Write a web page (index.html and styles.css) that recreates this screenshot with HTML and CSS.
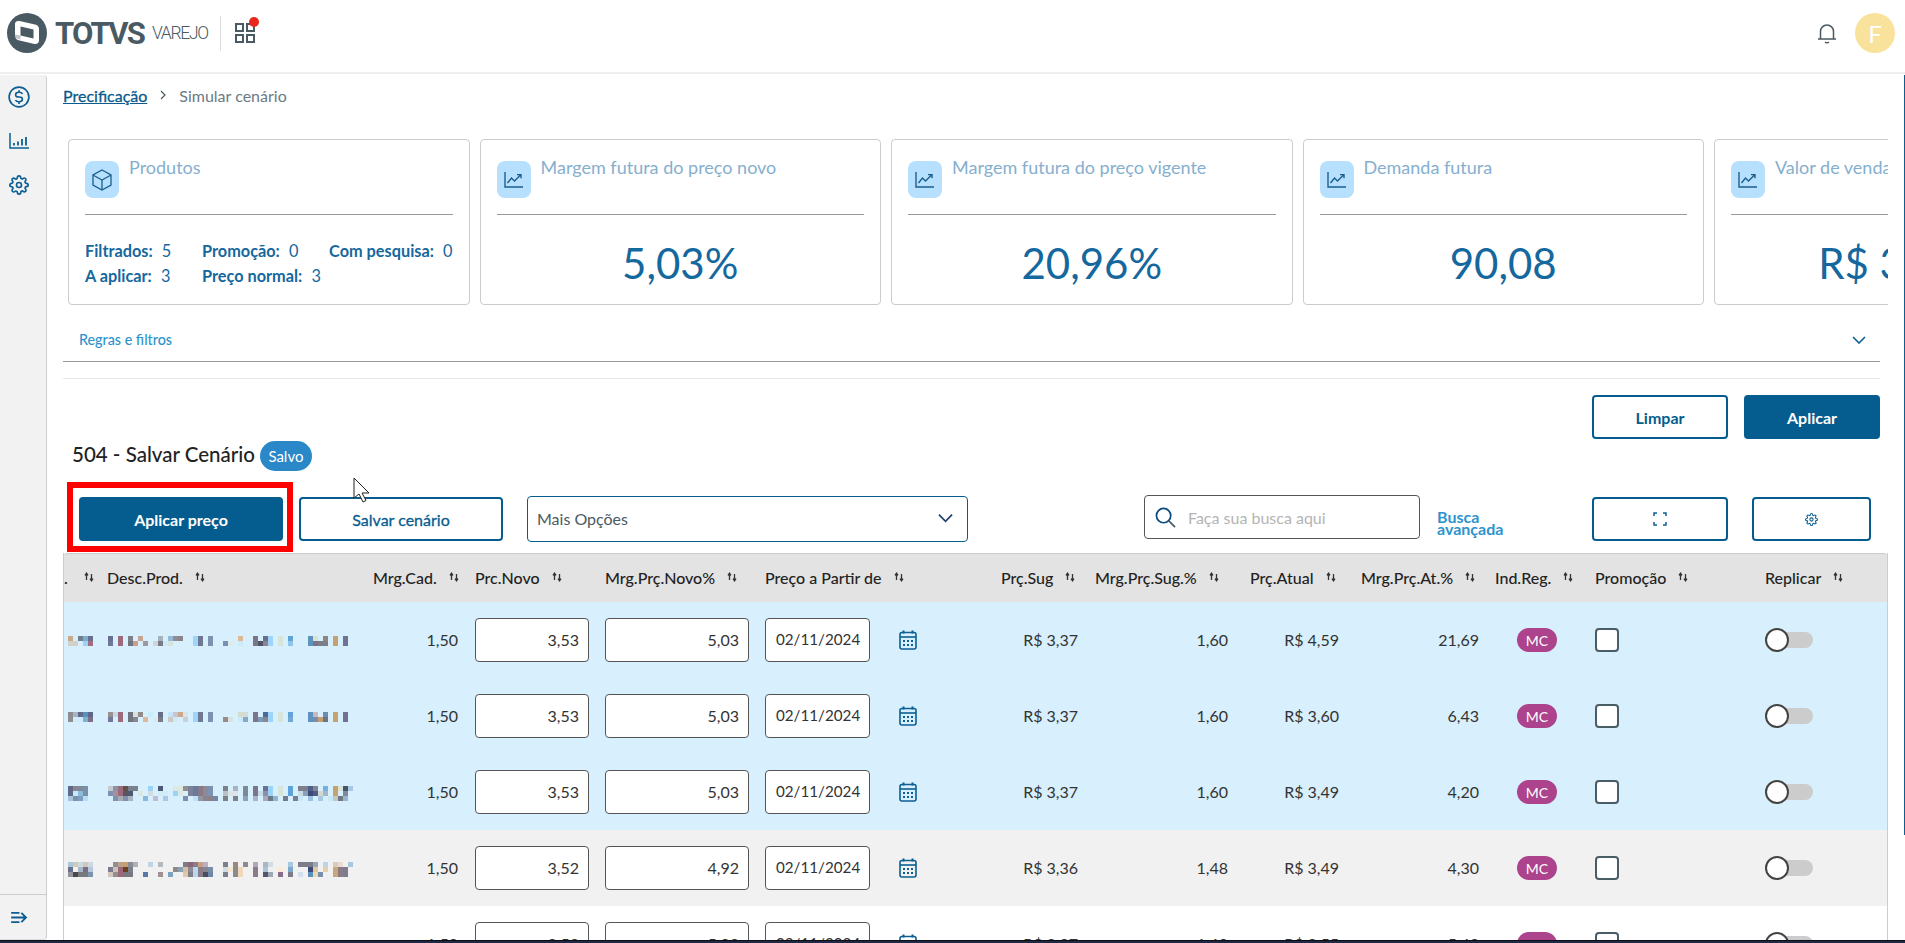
FILE: index.html
```html
<!DOCTYPE html>
<html lang="pt-BR">
<head>
<meta charset="utf-8">
<title>Simular cenário</title>
<link rel="stylesheet" href="styles.css">
</head>
<body>
<svg class="defs" aria-hidden="true">
  <symbol id="sort" viewBox="0 0 10 10"><path d="M2.5 8V2M1 3.4 2.5 1.2 4 3.4M7.5 2v6M6 6.6 7.5 8.8 9 6.6" fill="none" stroke="#333" stroke-width="1.3"/></symbol>
  <symbol id="trend" viewBox="0 0 20 18"><path d="M1 1v15h18M3.5 12l4-5 3 3 6-6M13 3.6h4v3.6" fill="none" stroke="#1b5f8e" stroke-width="1.4"/></symbol>
  <symbol id="cal" viewBox="0 0 18 20"><path d="M4.500 .5v3M13.500 .5v3" stroke="#0b5f92" stroke-width="2"/><rect x="1" y="2.500" width="16" height="16.500" rx="2" fill="none" stroke="#0b5f92" stroke-width="1.600"/><path d="M1 7h16" stroke="#0b5f92" stroke-width="1.600"/><path d="M4 10h2v2H4zM8 10h2v2H8zM12 10h2v2h-2zM4 14h2v2H4zM8 14h2v2H8zM12 14h2v2h-2z" fill="#0b5f92"/></symbol>
  <symbol id="gear" viewBox="0 0 24 24"><circle cx="12" cy="12" r="3" fill="none" stroke="currentColor" stroke-width="2"/><path d="M19.4 15a1.65 1.65 0 0 0 .33 1.82l.06.06a2 2 0 0 1 0 2.83 2 2 0 0 1-2.83 0l-.06-.06a1.65 1.65 0 0 0-1.82-.33 1.65 1.65 0 0 0-1 1.51V21a2 2 0 0 1-2 2 2 2 0 0 1-2-2v-.09A1.65 1.65 0 0 0 9 19.4a1.65 1.65 0 0 0-1.82.33l-.06.06a2 2 0 0 1-2.83 0 2 2 0 0 1 0-2.83l.06-.06a1.65 1.65 0 0 0 .33-1.82 1.65 1.65 0 0 0-1.51-1H3a2 2 0 0 1-2-2 2 2 0 0 1 2-2h.09A1.65 1.65 0 0 0 4.6 9a1.65 1.65 0 0 0-.33-1.82l-.06-.06a2 2 0 0 1 0-2.83 2 2 0 0 1 2.83 0l.06.06a1.65 1.65 0 0 0 1.82.33H9a1.65 1.65 0 0 0 1-1.51V3a2 2 0 0 1 2-2 2 2 0 0 1 2 2v.09a1.65 1.65 0 0 0 1 1.51 1.65 1.65 0 0 0 1.82-.33l.06-.06a2 2 0 0 1 2.83 0 2 2 0 0 1 0 2.83l-.06.06a1.65 1.65 0 0 0-.33 1.82V9a1.65 1.65 0 0 0 1.51 1H21a2 2 0 0 1 2 2 2 2 0 0 1-2 2h-.09a1.65 1.65 0 0 0-1.51 1z" fill="none" stroke="currentColor" stroke-width="2" stroke-linejoin="round"/></symbol>

  <g id="c12">
    <path d="M10 0h1v2h-1z" fill="#9c6a7a"/>
    <path fill="#9fd4fa" d="M25 0h1v2h-1zM40 0h1v2h-1z"/>
    <path fill="#6f7893" d="M26 0h1v2h-1z"/>
    <path fill="#7b92b0" d="M28 0h1v2h-1z"/>
    <path fill="#d6e4d9" d="M42 0h1v2h-1z"/>
    <path fill="#5f93bf" d="M48 0h1v2h-1z"/>
    <path fill="#c5a271" d="M53 0h1v2h-1z"/>
    <path fill="#70728f" d="M55 0h1v2h-1z"/>
    <path fill="#7c7488" d="M37 0h1v2h-1z"/>
  </g>
  <symbol id="m1" viewBox="0 0 57 2">
    <use href="#c12"/>
    <path fill="#c8a98a" d="M0 0h1v1H0z"/><path fill="#6f7d8c" d="M2 0h1v1H2z"/><path fill="#7aaed0" d="M3 0h1v1H3z"/><path fill="#68708f" d="M4 0h1v1H4zM8 0h1v1H8z"/><path fill="#7c808a" d="M12 0h1v1h-1z"/><path fill="#c9a392" d="M14 0h1v1h-1z"/><path fill="#a7b3bb" d="M18 0h1v1h-1z"/><path fill="#93bcdc" d="M20 0h1v1h-1z"/><path fill="#8b8e99" d="M21 0h1v1h-1z"/><path fill="#8f8388" d="M22 0h1v1h-1z"/><path fill="#dcba94" d="M34 0h1v1h-1z"/><path fill="#66718f" d="M39 0h1v1h-1z"/><path fill="#5fa4d8" d="M44 0h1v1h-1z"/><path fill="#d8e4d0" d="M49 0h1v1h-1z"/><path fill="#8e8587" d="M51 0h1v1h-1z"/>
    <path fill="#d2d0c8" d="M0 1h2v1H0z"/><path fill="#9ad2f8" d="M3 1h1v1H3z"/><path fill="#a26d80" d="M4 1h1v1H4z"/><path fill="#72789a" d="M8 1h1v1H8z"/><path fill="#70747e" d="M12 1h1v1h-1z"/><path fill="#c9a08c" d="M13 1h1v1h-1z"/><path fill="#9a9aa0" d="M15 1h1v1h-1z"/><path fill="#d0d4d8" d="M17 1h1v1h-1z"/><path fill="#767c88" d="M18 1h1v1h-1z"/><path fill="#cfe9fb" d="M19 1h1v1h-1z"/><path fill="#d5e2dd" d="M20 1h1v1h-1z"/><path fill="#7b8fb2" d="M31 1h1v1h-1z"/><path fill="#dcebeb" d="M32 1h1v1h-1z"/><path fill="#cdeafc" d="M34 1h1v1h-1z"/><path fill="#4e5568" d="M38 1h1v1h-1z"/><path fill="#8a8590" d="M39 1h1v1h-1z"/><path fill="#8cc4ea" d="M44 1h1v1h-1z"/><path fill="#7f6f88" d="M49 1h1v1h-1z"/><path fill="#7b7e88" d="M50 1h2v1h-2z"/>
  </symbol>
  <symbol id="m2" viewBox="0 0 57 2">
    <use href="#c12"/>
    <path fill="#8d8a90" d="M0 0h1v1H0z"/><path fill="#a6b4c8" d="M1 0h1v1H1z"/><path fill="#5f6a88" d="M2 0h1v1H2z"/><path fill="#5a90bc" d="M3 0h1v1H3z"/><path fill="#5e6788" d="M4 0h1v1H4z"/><path fill="#96908f" d="M8 0h1v1H8z"/><path fill="#c8d8e0" d="M9 0h1v1H9z"/><path fill="#6f7480" d="M12 0h1v1h-1z"/><path fill="#d8e2dc" d="M13 0h1v1h-1z"/><path fill="#938a90" d="M14 0h1v1h-1z"/><path fill="#c8ecfc" d="M16 0h1v1h-1z"/><path fill="#676d88" d="M18 0h1v1h-1z"/><path fill="#c4e4f8" d="M20 0h1v1h-1z"/><path fill="#c8c4d4" d="M21 0h1v1h-1z"/><path fill="#cfa88a" d="M22 0h1v1h-1z"/><path fill="#d8e4e6" d="M23 0h1v1h-1z"/><path fill="#d4dcd0" d="M34 0h2v1h-2z"/><path fill="#4a6a98" d="M39 0h1v1h-1z"/><path fill="#5fa4d8" d="M44 0h1v1h-1z"/><path fill="#c8b8c0" d="M49 0h1v1h-1z"/><path fill="#6f8cac" d="M51 0h1v1h-1z"/>
    <path fill="#8d8f90" d="M0 1h1v1H0z"/><path fill="#d0ecfb" d="M1 1h2v1H1z"/><path fill="#82aed0" d="M3 1h1v1H3z"/><path fill="#7c7088" d="M4 1h1v1H4z"/><path fill="#72789a" d="M8 1h1v1H8z"/><path fill="#70747e" d="M12 1h1v1h-1z"/><path fill="#8a868c" d="M13 1h1v1h-1z"/><path fill="#dcb99c" d="M15 1h1v1h-1z"/><path fill="#dce8ec" d="M17 1h1v1h-1z"/><path fill="#767c88" d="M18 1h1v1h-1z"/><path fill="#cfc8c0" d="M20 1h1v1h-1z"/><path fill="#cfe9fb" d="M21 1h1v1h-1z"/><path fill="#c8d0d8" d="M23 1h1v1h-1z"/><path fill="#978a88" d="M31 1h1v1h-1z"/><path fill="#d4e4e4" d="M32 1h1v1h-1z"/><path fill="#cdeafc" d="M34 1h1v1h-1z"/><path fill="#88a8c4" d="M35 1h1v1h-1z"/><path fill="#7d9ab8" d="M38 1h1v1h-1z"/><path fill="#8a8590" d="M39 1h1v1h-1z"/><path fill="#74a8d4" d="M44 1h1v1h-1z"/><path fill="#7b8ba8" d="M49 1h1v1h-1z"/><path fill="#c49f70" d="M50 1h1v1h-1z"/><path fill="#6f7480" d="M51 1h1v1h-1z"/>
  </symbol>
  <symbol id="m3" viewBox="0 0 57 3">
    <path fill="#5f6a88" d="M0 0h1v2H0z"/><path fill="#8a8590" d="M1 0h1v1H1z"/><path fill="#7f8a98" d="M2 0h1v1H2z"/><path fill="#7890a8" d="M3 0h1v2H3z"/><path fill="#c4ccd0" d="M8 0h1v1H8z"/><path fill="#8c94a0" d="M9 0h1v1H9z"/><path fill="#9c6a7a" d="M10 0h1v2h-1zM37 0h1v1h-1z"/><path fill="#5f5048" d="M11 0h1v1h-1z"/><path fill="#78808c" d="M12 0h2v1h-2z"/><path fill="#9ad2fa" d="M16 0h1v1h-1zM21 1h1v1h-1zM40 0h1v2h-1z"/><path fill="#4a5a78" d="M18 0h1v1h-1z"/><path fill="#dce8e0" d="M21 0h2v1h-2zM22 1h1v1h-1z"/><path fill="#8f8e90" d="M23 0h1v1h-1z"/><path fill="#7c8098" d="M24 0h1v2h-1z"/><path fill="#6a7a9a" d="M25 0h1v2h-1z"/><path fill="#8a7a88" d="M26 0h1v2h-1z"/><path fill="#8a8a98" d="M27 0h1v2h-1z"/><path fill="#7b92b0" d="M28 0h1v2h-1z"/><path fill="#7c8088" d="M31 0h1v1h-1zM31 2h1v1h-1zM33 2h1v1h-1z"/><path fill="#a8b4c0" d="M33 0h1v1h-1z"/><path fill="#7c8a98" d="M35 0h1v2h-1z"/><path fill="#7c7488" d="M37 0h1v2h-1z"/><path fill="#6a7290" d="M39 0h1v1h-1z"/><path fill="#d6e4d9" d="M42 0h1v2h-1z"/><path fill="#5fa4d8" d="M44 0h1v2h-1z"/><path fill="#7c808c" d="M46 0h2v1h-2z"/><path fill="#50608a" d="M48 0h1v1h-1z"/><path fill="#7f8594" d="M49 0h1v1h-1z"/><path fill="#78b0dc" d="M51 0h1v1h-1z"/><path fill="#c5a271" d="M53 0h1v2h-1z"/><path fill="#d8e4d8" d="M54 0h1v1h-1z"/><path fill="#4a5468" d="M55 0h1v1h-1z"/><path fill="#a8c8e4" d="M56 0h1v1h-1z"/>
    <path fill="#c8e8fb" d="M1 1h1v1H1z"/><path fill="#8cbcdc" d="M2 1h1v1H2z"/><path fill="#7c92b0" d="M8 1h1v1H8zM9 2h1v1H9z"/><path fill="#a6909c" d="M9 1h1v1H9z"/><path fill="#5a5460" d="M11 1h1v1h-1z"/><path fill="#4e5a70" d="M12 1h1v1h-1z"/><path fill="#d8e8e0" d="M14 1h1v1h-1z"/><path fill="#d0dce0" d="M16 1h1v1h-1z"/><path fill="#d0ecf8" d="M18 1h2v1h-2z"/><path fill="#b8c0c8" d="M31 1h1v1h-1z"/><path fill="#d8e4e8" d="M32 1h2v1h-2z"/><path fill="#c4dcec" d="M38 1h1v1h-1z"/><path fill="#8a90a8" d="M39 1h1v1h-1z"/><path fill="#c8dce8" d="M46 1h1v1h-1z"/><path fill="#8aa0b8" d="M47 1h1v1h-1z"/><path fill="#3e4a7a" d="M48 1h1v1h-1z"/><path fill="#4c5c88" d="M49 1h1v1h-1z"/><path fill="#d0d8d0" d="M50 1h1v1h-1z"/><path fill="#a0b8cc" d="M51 1h1v1h-1z"/><path fill="#8088a0" d="M55 1h1v1h-1z"/>
    <path fill="#a4c4e0" d="M0 2h1v1H0z"/><path fill="#8090a8" d="M1 2h1v1H1z"/><path fill="#7ca0c4" d="M2 2h1v1H2z"/><path fill="#bcdcf0" d="M3 2h1v1H3z"/><path fill="#a8aab4" d="M10 2h1v1h-1z"/><path fill="#8090b0" d="M11 2h1v1h-1z"/><path fill="#a8b4c4" d="M12 2h1v1h-1z"/><path fill="#88b8e0" d="M15 2h1v1h-1z"/><path fill="#c0bcd0" d="M17 2h1v1h-1z"/><path fill="#a8c8e4" d="M19 2h1v1h-1zM50 2h1v1h-1z"/><path fill="#7c90b0" d="M23 2h1v1h-1z"/><path fill="#c0e0f8" d="M25 2h1v1h-1z"/><path fill="#9098a8" d="M26 2h1v1h-1z"/><path fill="#8a8490" d="M27 2h1v1h-1z"/><path fill="#8c8088" d="M28 2h1v1h-1z"/><path fill="#7088a8" d="M29 2h1v1h-1z"/><path fill="#d8f0fc" d="M32 2h1v1h-1z"/><path fill="#88a4bc" d="M35 2h1v1h-1z"/><path fill="#a8b4cc" d="M37 2h1v1h-1z"/><path fill="#a8a8c0" d="M39 2h1v1h-1z"/><path fill="#707880" d="M40 2h1v1h-1z"/><path fill="#8cb4d8" d="M41 2h1v1h-1z"/><path fill="#707c90" d="M43 2h1v1h-1z"/><path fill="#788090" d="M45 2h1v1h-1z"/><path fill="#c8e8fc" d="M46 2h1v1h-1z"/><path fill="#9cc0e0" d="M48 2h1v1h-1z"/><path fill="#c4e8fc" d="M52 2h1v1h-1z"/><path fill="#c4c8c0" d="M53 2h1v1h-1z"/><path fill="#707888" d="M54 2h1v1h-1z"/><path fill="#9cb4cc" d="M55 2h1v1h-1z"/>
  </symbol>
  <symbol id="m4" viewBox="0 0 57 3">
    <path fill="#a8c8dc" d="M0 0h1v1H0z"/><path fill="#d4c8b8" d="M1 0h1v1H1zM3 0h1v1H3z"/><path fill="#c8dce4" d="M2 0h1v1H2z"/><path fill="#ccd8e4" d="M4 0h1v1H4z"/><path fill="#8f8f90" d="M9 0h1v1H9z"/><path fill="#c0a088" d="M10 0h1v1h-1z"/><path fill="#c8a070" d="M11 0h1v1h-1z"/><path fill="#8c8c94" d="M12 0h1v1h-1z"/><path fill="#b0b0b8" d="M13 0h1v1h-1z"/><path fill="#bcd4e8" d="M16 0h1v1h-1zM51 0h1v1h-1z"/><path fill="#b0bac0" d="M18 0h1v1h-1z"/><path fill="#7c7c88" d="M23 0h1v1h-1z"/><path fill="#8c6478" d="M24 0h1v1h-1z"/><path fill="#8c7c88" d="M25 0h1v1h-1z"/><path fill="#c8a088" d="M26 0h1v1h-1z"/><path fill="#b8b0c4" d="M27 0h1v1h-1z"/><path fill="#7c8088" d="M31 0h1v1h-1zM31 2h1v1h-1z"/><path fill="#9c8880" d="M33 0h1v1h-1z"/><path fill="#8c8c90" d="M35 0h1v1h-1zM33 1h1v2h-1z"/><path fill="#b0a8b8" d="M37 0h1v1h-1z"/><path fill="#b0b4bc" d="M39 0h1v1h-1z"/><path fill="#d0dce8" d="M40 0h1v1h-1z"/><path fill="#a8c8e0" d="M44 0h1v1h-1zM56 0h1v1h-1z"/><path fill="#7c7c8a" d="M46 0h3v1h-3z"/><path fill="#98a4b8" d="M49 0h1v1h-1z"/><path fill="#dccabc" d="M53 0h1v1h-1z"/><path fill="#e8dcd4" d="M54 0h1v1h-1z"/>
    <path fill="#6a7088" d="M0 1h1v1H0z"/><path fill="#a8b8c8" d="M2 1h1v1H2z"/><path fill="#7a6f80" d="M3 1h1v1H3z"/><path fill="#b8c8dc" d="M4 1h1v1H4z"/><path fill="#7a7a90" d="M8 1h1v1H8z"/><path fill="#d0c0b8" d="M9 1h1v1H9z"/><path fill="#9a6878" d="M10 1h1v2h-1z"/><path fill="#6a4020" d="M11 1h1v1h-1z"/><path fill="#7c8088" d="M12 1h1v1h-1z"/><path fill="#8f8a88" d="M21 1h1v1h-1z"/><path fill="#8aa0b8" d="M22 1h1v1h-1z"/><path fill="#d8c0a0" d="M23 1h1v1h-1z"/><path fill="#8f8a94" d="M24 1h1v1h-1z"/><path fill="#b8d8f0" d="M25 1h1v2h-1z"/><path fill="#8a7c88" d="M26 1h1v2h-1z"/><path fill="#8a8490" d="M27 1h1v1h-1z"/><path fill="#7b8ea8" d="M28 1h1v1h-1z"/><path fill="#d0dce8" d="M31 1h1v1h-1z"/><path fill="#f8e8d0" d="M32 1h1v1h-1z"/><path fill="#f0d8b8" d="M34 1h1v2h-1z"/><path fill="#887c8c" d="M37 1h1v2h-1z"/><path fill="#a8c4dc" d="M39 1h1v1h-1z"/><path fill="#fbecd8" d="M42 1h1v1h-1z"/><path fill="#7ca8cc" d="M44 1h1v1h-1z"/><path fill="#3e4a78" d="M48 1h1v1h-1z"/><path fill="#e0c8a0" d="M49 1h1v1h-1z"/><path fill="#e8d0a8" d="M51 1h1v1h-1z"/><path fill="#c8a878" d="M53 1h1v2h-1z"/><path fill="#887c88" d="M54 1h1v2h-1z"/><path fill="#807c90" d="M55 1h1v2h-1z"/>
    <path fill="#90949c" d="M0 2h1v1H0z"/><path fill="#484848" d="M1 2h1v1H1z"/><path fill="#787880" d="M2 2h2v1H2zM11 2h2v1h-2z"/><path fill="#7c94b0" d="M4 2h1v1H4z"/><path fill="#d4c8bc" d="M8 2h1v1H8z"/><path fill="#909090" d="M9 2h1v1H9z"/><path fill="#5878a8" d="M15 2h1v1h-1z"/><path fill="#a09090" d="M18 2h1v1h-1z"/><path fill="#7ca4c0" d="M20 2h1v1h-1z"/><path fill="#e0c8a8" d="M23 2h1v1h-1z"/><path fill="#7f7f88" d="M24 2h1v1h-1z"/><path fill="#484c60" d="M27 2h1v1h-1z"/><path fill="#7088a8" d="M28 2h1v1h-1z"/><path fill="#505868" d="M39 2h1v1h-1z"/><path fill="#a0a8b8" d="M40 2h1v1h-1z"/><path fill="#886c88" d="M42 2h1v1h-1z"/><path fill="#7c7c88" d="M44 2h1v1h-1z"/><path fill="#d0e0ec" d="M46 2h1v1h-1z"/><path fill="#5890c0" d="M48 2h1v1h-1z"/><path fill="#f0d8b0" d="M49 2h1v1h-1z"/><path fill="#7890ac" d="M50 2h1v1h-1z"/>
  </symbol>
</svg>

<div class="app">
  <header class="topbar">
    <svg class="logo-mark" viewBox="0 0 40 40" aria-hidden="true"><circle cx="20" cy="20" r="20" fill="#4a5a62"/><path d="M8 11C8 8.500 10 7.500 12.500 8L28 11.500C30.500 12 32 13.500 32 16V27.500C32 30 30 31.500 27.500 31L12.500 27.500C10 27 8 25.500 8 23z" fill="#fff"/><path d="M13.500 13.500 26.500 16.500V25.500L13.500 22.500z" fill="#4a5a62"/><path d="M8 21.500 13.500 22.500V26.500L8 25z" fill="#4a5a62" opacity=".35"/></svg>
    <span class="brand">TOTVS</span>
    <span class="brand-sub">VAREJO</span>
    <span class="topbar-sep"></span>
    <span class="apps">
      <svg class="apps-icon" viewBox="0 0 20 20" aria-hidden="true"><path d="M1 1h7v7H1zM12 1h7v7h-7zM1 12h7v7H1zM12 12h7v7h-7z" fill="none" stroke="#4a5a62" stroke-width="2"/></svg>
      <span class="apps-dot"></span>
    </span>
    <svg class="bell" viewBox="0 0 20 20" aria-hidden="true"><path d="M1 15.500h18M3.500 15.500V8a6.500 6.500 0 0 1 13 0v7.500M8 18.500q2 1.500 4 0" fill="none" stroke="#4a5a62" stroke-width="1.500"/></svg>
    <span class="avatar">F</span>
  </header>

  <div class="body">
    <nav class="sidebar">
      <svg class="side-icon side-first" viewBox="0 0 24 24" aria-hidden="true"><circle cx="12" cy="12" r="10.800" fill="none" stroke="currentColor" stroke-width="1.800"/><path d="M15.800 8.800Q15 6.800 12 6.800 8.300 6.800 8.300 9.500t3.700 2.500 3.700 2.500-3.700 2.700q-3 0-3.800-2M12 4.500v2.300M12 17.200v2.300" fill="none" stroke="currentColor" stroke-width="1.800"/></svg>
      <svg class="side-icon side-chart" viewBox="0 0 20 16" aria-hidden="true"><path d="M1 0v15h19" fill="none" stroke="currentColor" stroke-width="1.500"/><path d="M5 10v2.500M9 8.500v4M13 6v6.500M17 4v8.500" fill="none" stroke="currentColor" stroke-width="1.800"/></svg>
      <svg class="side-icon side-gear" aria-hidden="true"><use href="#gear"/></svg>
      <div class="side-foot">
        <svg class="side-expand" viewBox="0 0 18 14" aria-hidden="true"><path d="M0 2h9M0 7h15M0 12h9M11 2l5 5-5 5" fill="none" stroke="currentColor" stroke-width="2"/></svg>
      </div>
    </nav>

    <main class="content">
      <div class="crumbs"><a class="crumb-link">Precificação</a><svg class="crumb-sep" viewBox="0 0 6 10" aria-hidden="true"><path d="M1 1l4 4-4 4" fill="none" stroke="#4a5a62" stroke-width="1.200"/></svg><span class="crumb-now">Simular cenário</span></div>

      <section class="cards">
        <article class="card">
          <div class="card-head">
            <span class="card-icon"><svg class="box-icon" viewBox="0 0 20 22" aria-hidden="true"><path d="M10 1 19 6v10l-9 5-9-5V6zM1 6l9 5 9-5M10 11v10" fill="none" stroke="#1b5f8e" stroke-width="1.300"/></svg></span>
            <h2 class="card-title">Produtos</h2>
          </div>
          <div class="stats">
            <span class="stat stat-a"><b>Filtrados:</b> 5</span><span class="stat stat-b"><b>Promoção:</b> 0</span><span class="stat stat-c"><b>Com pesquisa:</b> 0</span>
            <span class="stat stat-a"><b>A aplicar:</b> 3</span><span class="stat stat-b"><b>Preço normal:</b> 3</span>
          </div>
        </article>
        <article class="card">
          <div class="card-head"><span class="card-icon"><svg class="trend-icon"><use href="#trend"/></svg></span><h2 class="card-title">Margem futura do preço novo</h2></div>
          <div class="card-value">5,03%</div>
        </article>
        <article class="card">
          <div class="card-head"><span class="card-icon"><svg class="trend-icon"><use href="#trend"/></svg></span><h2 class="card-title">Margem futura do preço vigente</h2></div>
          <div class="card-value">20,96%</div>
        </article>
        <article class="card">
          <div class="card-head"><span class="card-icon"><svg class="trend-icon"><use href="#trend"/></svg></span><h2 class="card-title">Demanda futura</h2></div>
          <div class="card-value">90,08</div>
        </article>
        <article class="card">
          <div class="card-head"><span class="card-icon"><svg class="trend-icon"><use href="#trend"/></svg></span><h2 class="card-title">Valor de venda futuro</h2></div>
          <div class="card-value">R$ 30.245</div>
        </article>
      </section>

      <div class="rules">
        <span class="rules-label">Regras e filtros</span>
        <svg class="rules-chevron" viewBox="0 0 14 8" aria-hidden="true"><path d="M1 1l6 6 6-6" fill="none" stroke="#0b5f92" stroke-width="1.600"/></svg>
      </div>
      <div class="soft-line"></div>

      <div class="actions">
        <button class="btn btn-outline btn-limpar">Limpar</button>
        <button class="btn btn-solid btn-aplicar">Aplicar</button>
      </div>

      <div class="title-row">
        <h1 class="scenario">504 - Salvar Cenário</h1>
        <span class="badge-saved">Salvo</span>
        <svg class="cursor" viewBox="0 0 18 26" aria-hidden="true"><path d="M1 1v20l5-4 4 8 3-1.500-4-7.500h7z" fill="#fff" stroke="#222" stroke-width="1"/></svg>
      </div>

      <div class="toolbar">
        <div class="highlight"><button class="btn btn-solid btn-price">Aplicar preço</button></div>
        <button class="btn btn-outline btn-save">Salvar cenário</button>
        <div class="select"><span>Mais Opções</span><svg class="select-chevron" viewBox="0 0 16 10" aria-hidden="true"><path d="M1 1.500l7 7 7-7" fill="none" stroke="#1f3f6e" stroke-width="1.800"/></svg></div>
        <div class="search">
          <svg class="search-icon" viewBox="0 0 22 22" aria-hidden="true"><circle cx="9" cy="9" r="7.500" fill="none" stroke="#0b4a7e" stroke-width="1.800"/><path d="M14.500 14.500 21 21" stroke="#4a5a62" stroke-width="1.800"/></svg>
          <span class="search-text">Faça sua busca aqui</span>
        </div>
        <a class="advanced">Busca avançada</a>
        <button class="btn btn-outline btn-full"><svg class="full-icon" viewBox="0 0 14 14" aria-hidden="true"><path d="M1 4V1h3M10 1h3v3M13 10v3h-3M4 13H1v-3" fill="none" stroke="#0b5f92" stroke-width="1.500"/></svg></button>
        <button class="btn btn-outline btn-gear"><svg class="gear-icon"><use href="#gear"/></svg></button>
      </div>

      <section class="table">
        <div class="row head">
          <div class="th th-clip">.<svg class="sort"><use href="#sort"/></svg></div>
          <div class="th">Desc.Prod.<svg class="sort"><use href="#sort"/></svg></div>
          <div class="th">Mrg.Cad.<svg class="sort"><use href="#sort"/></svg></div>
          <div class="th">Prc.Novo<svg class="sort"><use href="#sort"/></svg></div>
          <div class="th">Mrg.Prç.Novo%<svg class="sort"><use href="#sort"/></svg></div>
          <div class="th">Preço a Partir de<svg class="sort"><use href="#sort"/></svg></div>
          <div class="th">Prç.Sug<svg class="sort"><use href="#sort"/></svg></div>
          <div class="th">Mrg.Prç.Sug.%<svg class="sort"><use href="#sort"/></svg></div>
          <div class="th">Prç.Atual<svg class="sort"><use href="#sort"/></svg></div>
          <div class="th">Mrg.Prç.At.%<svg class="sort"><use href="#sort"/></svg></div>
          <div class="th">Ind.Reg.<svg class="sort"><use href="#sort"/></svg></div>
          <div class="th">Promoção<svg class="sort"><use href="#sort"/></svg></div>
          <div class="th">Replicar<svg class="sort"><use href="#sort"/></svg></div>
        </div>

        <div class="row selected">
          <div class="mosaic-cell"><svg class="mosaic mosaic-2"><use href="#m1"/></svg></div>
          <div class="num num-cad">1,50</div>
          <div class="cell"><input class="field field-price" value="3,53" readonly></div>
          <div class="cell"><input class="field field-margin" value="5,03" readonly></div>
          <div class="cell"><input class="field field-date" value="02/11/2024" readonly><svg class="cal"><use href="#cal"/></svg></div>
          <div class="num num-sug">R$ 3,37</div>
          <div class="num num-wide">1,60</div>
          <div class="num num-wide">R$ 4,59</div>
          <div class="num num-at">21,69</div>
          <div class="cell"><span class="tag">MC</span></div>
          <div class="cell"><span class="check"></span></div>
          <div class="cell"><span class="toggle"></span></div>
        </div>

        <div class="row selected">
          <div class="mosaic-cell"><svg class="mosaic mosaic-2"><use href="#m2"/></svg></div>
          <div class="num num-cad">1,50</div>
          <div class="cell"><input class="field field-price" value="3,53" readonly></div>
          <div class="cell"><input class="field field-margin" value="5,03" readonly></div>
          <div class="cell"><input class="field field-date" value="02/11/2024" readonly><svg class="cal"><use href="#cal"/></svg></div>
          <div class="num num-sug">R$ 3,37</div>
          <div class="num num-wide">1,60</div>
          <div class="num num-wide">R$ 3,60</div>
          <div class="num num-at">6,43</div>
          <div class="cell"><span class="tag">MC</span></div>
          <div class="cell"><span class="check"></span></div>
          <div class="cell"><span class="toggle"></span></div>
        </div>

        <div class="row selected">
          <div class="mosaic-cell"><svg class="mosaic mosaic-3"><use href="#m3"/></svg></div>
          <div class="num num-cad">1,50</div>
          <div class="cell"><input class="field field-price" value="3,53" readonly></div>
          <div class="cell"><input class="field field-margin" value="5,03" readonly></div>
          <div class="cell"><input class="field field-date" value="02/11/2024" readonly><svg class="cal"><use href="#cal"/></svg></div>
          <div class="num num-sug">R$ 3,37</div>
          <div class="num num-wide">1,60</div>
          <div class="num num-wide">R$ 3,49</div>
          <div class="num num-at">4,20</div>
          <div class="cell"><span class="tag">MC</span></div>
          <div class="cell"><span class="check"></span></div>
          <div class="cell"><span class="toggle"></span></div>
        </div>

        <div class="row striped">
          <div class="mosaic-cell"><svg class="mosaic mosaic-3"><use href="#m4"/></svg></div>
          <div class="num num-cad">1,50</div>
          <div class="cell"><input class="field field-price" value="3,52" readonly></div>
          <div class="cell"><input class="field field-margin" value="4,92" readonly></div>
          <div class="cell"><input class="field field-date" value="02/11/2024" readonly><svg class="cal"><use href="#cal"/></svg></div>
          <div class="num num-sug">R$ 3,36</div>
          <div class="num num-wide">1,48</div>
          <div class="num num-wide">R$ 3,49</div>
          <div class="num num-at">4,30</div>
          <div class="cell"><span class="tag">MC</span></div>
          <div class="cell"><span class="check"></span></div>
          <div class="cell"><span class="toggle"></span></div>
        </div>

        <div class="row">
          <div class="text-cell">899</div>
          <div class="text-cell">CERV AMSTEL 269 ML ULTRA LT</div>
          <div class="num num-cad">1,50</div>
          <div class="cell"><input class="field field-price" value="3,53" readonly></div>
          <div class="cell"><input class="field field-margin" value="5,03" readonly></div>
          <div class="cell"><input class="field field-date" value="02/11/2024" readonly><svg class="cal"><use href="#cal"/></svg></div>
          <div class="num num-sug">R$ 3,37</div>
          <div class="num num-wide">1,60</div>
          <div class="num num-wide">R$ 3,55</div>
          <div class="num num-at">5,43</div>
          <div class="cell"><span class="tag">MC</span></div>
          <div class="cell"><span class="check"></span></div>
          <div class="cell"><span class="toggle"></span></div>
        </div>
      </section>
    </main>
    <span class="edge"></span>
  </div>
</div>
<div class="taskbar"></div>
</body>
</html>
```
FILE: styles.css
```css
*, *::before { box-sizing: border-box; }
html, body { margin: 0; height: 943px; overflow: hidden; }
body {
  display: flex;
  flex-direction: column;
  background: #fff;
  font-family: "Lato", "Noto Sans", sans-serif;
  color: #333;
}
.defs { position: absolute; width: 0; height: 0; }

.app { flex: 1 1 auto; min-height: 0; display: flex; flex-direction: column; overflow: hidden; }
.taskbar { flex: 0 0 3px; background: #1c2a48; border-top: 1px solid #0d0d12; }

/* top bar */
.topbar {
  flex: 0 0 74px;
  display: flex;
  align-items: center;
  padding: 0 10px 6px 7px;
  border-bottom: 2px solid #eee;
  height: 74px;
}
.logo-mark { flex: none; width: 40px; height: 40px; margin-right: 8px; }
.brand { flex: none; width: 88px; font-family: "Roboto", sans-serif; font-weight: 700; font-size: 31px; color: #4a5a62; letter-spacing: -1.800px; line-height: 1; white-space: nowrap; }
.brand-sub { flex: none; width: 56px; font-family: "Roboto", sans-serif; font-weight: 300; font-size: 17.500px; color: #4a5a62; margin-left: 9px; letter-spacing: -1.300px; white-space: nowrap; }
.topbar-sep { flex: none; width: 1px; height: 35px; background: #ddd; margin-left: 12px; }
.apps { position: relative; display: block; width: 20px; height: 20px; margin-left: 14px; }
.apps-icon { display: block; width: 20px; height: 20px; }
.apps-dot { position: absolute; right: -4px; top: -6px; width: 10px; height: 10px; border-radius: 50%; background: #e8261c; }
.bell { width: 20px; height: 21px; margin-left: auto; }
.avatar {
  width: 40px; height: 40px; margin-left: 18px; border-radius: 50%;
  background: #f9e29c; color: #fff; font-size: 24px;
  display: flex; align-items: center; justify-content: center;
}

/* frame */
.body { flex: 1 1 auto; min-height: 0; display: flex; padding-top: 1px; }
.sidebar {
  flex: 0 0 47px;
  display: flex; flex-direction: column; align-items: center;
  background: #f2f2f2;
  border-right: 1px solid #ccc;
  border-bottom: 1px solid #ddd;
  border-radius: 0 4px 4px 0;
  color: #0b5f92;
  padding-right: 8px;
}
.side-icon { width: 20px; height: 20px; margin-top: 22px; flex: none; }
.side-first { width: 22px; height: 22px; margin-top: 11px; }
.side-chart { height: 16px; margin-top: 25px; }
.side-gear { margin-top: 26px; }
.side-foot {
  margin-top: auto; align-self: stretch; margin-right: -8px;
  height: 45px; border-top: 1px solid #ccc;
  display: flex; align-items: center; justify-content: center; padding-right: 8px;
}
.side-expand { width: 17px; height: 13px; }
.edge { flex: 0 0 1px; height: 760px; background: #0b5f92; }

.content { flex: 1 1 auto; min-width: 0; padding-left: 16px; overflow: hidden; }

.crumbs { height: 40px; display: flex; align-items: center; font-size: 16px; }
.crumb-link { color: #0b5b8c; font-weight: 400; text-decoration: underline; -webkit-text-stroke: .3px #0b5b8c; }
.crumb-sep { width: 6px; height: 10px; margin: 0 13px 0 13px; }
.crumb-now { color: #6b7a85; }

/* cards */
.cards { display: flex; gap: 10px; width: 1825px; padding-left: 5px; margin-top: 24px; overflow: hidden; }
.card { flex: 0 0 401.5px; min-width: 0; height: 166px; border: 1px solid #ccc; border-radius: 4px; padding: 21px 16px 0; }
.card-head { display: flex; gap: 10px; height: 54px; border-bottom: 1px solid #999; }
.card-icon {
  flex: 0 0 34px; height: 37px; border-radius: 8px; background: #b6e0fd;
  display: flex; align-items: center; justify-content: center;
}
.box-icon { width: 20px; height: 22px; }
.trend-icon { width: 20px; height: 18px; }
.card-title { margin: 0; font-size: 18px; font-weight: 400; color: #86afce; white-space: nowrap; line-height: 12px; }
.card-value { margin-top: 25px; text-align: center; font-size: 42px; line-height: 46px; color: #15689e; white-space: nowrap; }
.stats { display: grid; grid-template-columns: 117px 126px minmax(0, 1fr); margin-top: 27px; row-gap: 8px; font-size: 16.300px; line-height: 17px; color: #15689e; }
.stat { white-space: nowrap; }
.stat b { font-weight: 700; margin-right: 5px; }
.stat-c { justify-self: end; }

/* rules */
.rules { width: 1817px; height: 57px; display: flex; align-items: center; justify-content: space-between; padding: 13px 14px 0 16px; border-bottom: 1px solid #999; }
.rules-label { font-size: 14.300px; font-weight: 500; color: #2e93cc; }
.rules-chevron { width: 14px; height: 8px; }
.soft-line { width: 1817px; height: 1px; background: #e8e8e8; margin-top: 16px; }

/* buttons */
.btn {
  height: 44px; border-radius: 4px; font: 700 16px "Lato", sans-serif;
  display: flex; align-items: center; justify-content: center; padding: 0; cursor: pointer;
}
.btn-solid { background: #055d8f; border: 0; color: #fff; }
.btn-outline { background: #fff; border: 2px solid #055d8f; color: #055d8f; }

.actions { display: flex; gap: 16px; justify-content: flex-end; width: 1817px; margin-top: 16px; }
.btn-limpar { width: 136px; }
.btn-aplicar { width: 136px; }

.title-row { height: 30px; margin-top: 2px; display: flex; align-items: center; padding-left: 9px; position: relative; }
.scenario { margin: 0 0 4px; font-size: 20.500px; font-weight: 500; color: #222; line-height: 26px; }
.badge-saved {
  margin-left: 5px; width: 52px; height: 30px; border-radius: 15px; background: #2a87c8; color: #fff;
  font-size: 15px; display: flex; align-items: center; justify-content: center;
}
.cursor { position: absolute; left: 290px; top: 36px; width: 18px; height: 26px; }

/* toolbar */
.toolbar { display: flex; align-items: flex-start; height: 70px; margin-top: 11px; padding-left: 4px; }
.highlight { width: 226px; height: 70px; border: 6px solid #f00; padding: 9px 4px 0 6px; }
.btn-price { width: 204px; }
.btn-save { width: 204px; margin: 15px 0 0 6px; font-weight: 400; -webkit-text-stroke: .3px #055d8f; }
.select {
  width: 441px; height: 46px; margin: 14px 0 0 24px; padding: 0 14px 2px 9px;
  border: 1px solid #055d8f; border-radius: 4px; display: flex; align-items: center; justify-content: space-between;
  font-size: 16px; color: #4a5a62;
}
.select-chevron { width: 15px; height: 10px; }
.search {
  width: 276px; height: 44px; margin: 13px 0 0 176px; padding-left: 10px;
  border: 1px solid #555; border-radius: 4px; display: flex; align-items: center; gap: 12px;
}
.search-icon { width: 21px; height: 21px; flex: none; }
.search-text { font-size: 16px; color: #b4b4b4; white-space: nowrap; }
.advanced { width: 75px; margin: 29px 0 0 17px; font-size: 16px; font-weight: 700; line-height: 12px; color: #2e93cc; }
.btn-full { width: 136px; margin: 15px 0 0 80px; }
.full-icon { width: 14px; height: 14px; }
.btn-gear { width: 119px; margin: 15px 0 0 24px; }
.gear-icon { width: 13px; height: 13px; color: #0b5f92; }

/* table */
.table { width: 1825px; margin-top: 1px; border-left: 1px solid #ccc; border-right: 1px solid #ccc; }
.row {
  display: grid;
  grid-template-columns: 43px 266px 102px 130px 160px 236px 94px 155px 111px 134px 100px 170px 122px;
  height: 76px; align-items: center;
}
.head { height: 49px; padding-bottom: 2px; background: #e3e3e3; border-top: 1px solid #ccc; border-radius: 3px 3px 0 0; }
.selected { background: #d8effd; }
.striped { background: #f1f1f1; }

.th { display: flex; align-items: center; gap: 12px; font-size: 16px; font-weight: 500; color: #222; white-space: nowrap; }
.th-clip { gap: 16px; }
.sort { width: 10px; height: 10px; flex: none; }

.mosaic-cell { grid-column: span 2; padding-left: 4px; }
.mosaic { display: block; width: 285px; shape-rendering: crispEdges; }
.mosaic-2 { height: 10px; margin-top: 2px; }
.mosaic-3 { height: 15px; margin-top: 3px; }
.text-cell { font-size: 16px; color: #333; white-space: nowrap; overflow: hidden; }

.num { text-align: right; font-size: 16px; color: #333; white-space: nowrap; padding-bottom: 2px; }
.num-cad, .num-sug { padding-right: 17px; }
.num-wide { padding-right: 22px; }
.num-at { padding-right: 16px; }
.cell { display: flex; align-items: center; }

.field {
  height: 44px; border: 1px solid #555; border-radius: 4px; background: #fff;
  font: 400 16px "Lato", sans-serif; color: #333; outline: 0; text-align: right; padding: 0 9px 2px;
}
.field-price { width: 114px; }
.field-margin { width: 144px; }
.field-date { width: 105px; text-align: left; padding: 0 0 2px 10px; font-size: 15.200px; }
.cal { width: 18px; height: 20px; margin-left: 29px; flex: none; }

.tag {
  margin-left: 22px; width: 40px; height: 24px; border-radius: 12px; background: #ac438c; color: #fff;
  font-size: 14px; display: flex; align-items: center; justify-content: center;
}
.check { width: 24px; height: 24px; border: 2px solid #4a5c66; border-radius: 4px; background: #fff; }
.toggle { position: relative; display: block; width: 48px; height: 16px; border-radius: 8px; background: #ccc; }
.toggle::before {
  content: ""; position: absolute; left: 0; top: -4px; width: 24px; height: 24px;
  border: 2px solid #444; border-radius: 50%; background: #fff;
}
```
